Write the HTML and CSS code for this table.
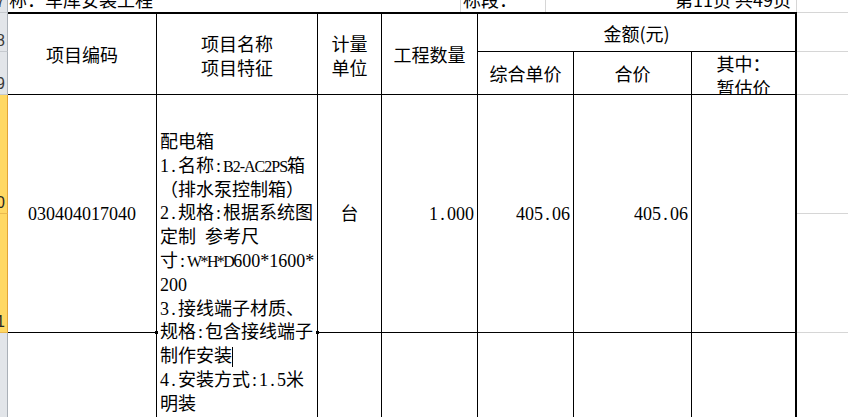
FILE: index.html
```html
<!DOCTYPE html>
<html lang="zh-CN">
<head>
<meta charset="utf-8">
<title>分部分项工程量清单</title>
<link rel="stylesheet" href="styles.css">
</head>
<body>
<div class="sheet">
  <!-- row 7 (cut off at the top) -->
  <div class="rh row-7"><span>7</span></div>
  <div class="toprow">
    <div class="seg seg-name"><span class="cut">称：车库安装工程</span></div>
    <div class="seg seg-bid"><span class="cut">标段：</span></div>
    <div class="seg seg-page"><span class="cut">第11页 共49页</span></div>
    <div class="seg seg-rest"></div>
  </div>

  <!-- rows 8-9: table header -->
  <div class="rh row-8 first line"><span>8</span></div>
  <div class="rh row-9 line"><span>9</span></div>

  <div class="cell hd top col-a rows-hd">项目编码</div>
  <div class="cell hd top col-b rows-hd nudge">项目名称<br>项目特征</div>
  <div class="cell hd top col-c rows-hd nudge">计量<br>单位</div>
  <div class="cell hd top col-d rows-hd">工程数量</div>
  <div class="cell hd top thick-r col-amt row-8">金额(元)</div>
  <div class="gl gl-first col-r row-8"></div>

  <div class="cell hd col-e row-9">综合单价</div>
  <div class="cell hd col-f row-9">合价</div>
  <div class="cell hd thick-r col-g row-9 clip">其中：<br>暂估价</div>
  <div class="gl col-r row-9"></div>

  <!-- rows 10-11: item -->
  <div class="rh sel line row-10"><span>10</span></div>
  <div class="rh sel line row-11"><span>11</span></div>

  <div class="cell ser mid col-a rows-body">030404017040</div>
  <div class="cell open ser edit col-b rows-edit">
    <div class="ln">配电箱</div>
    <div class="ln">1<span class="hw">.</span>名称<span class="hw">:</span><span class="lt">B2-AC2PS</span>箱</div>
    <div class="ln">（排水泵控制箱）</div>
    <div class="ln">2<span class="hw">.</span>规格<span class="hw">:</span>根据系统图</div>
    <div class="ln">定制<span class="hw">&nbsp;</span>参考尺</div>
    <div class="ln">寸<span class="hw">:</span><span class="lt tight">W*H*D</span>600*1600*</div>
    <div class="ln">200</div>
    <div class="ln">3<span class="hw">.</span>接线端子材质、</div>
    <div class="ln">规格<span class="hw">:</span>包含接线端子</div>
    <div class="ln">制作安装<span class="caret"></span></div>
    <div class="ln">4<span class="hw">.</span>安装方式<span class="hw">:</span>1<span class="hw">.</span>5米</div>
    <div class="ln">明装</div>
    <span class="dot dot-l"></span>
    <span class="dot dot-r"></span>
  </div>
  <div class="cell ser mid col-c rows-body">台</div>
  <div class="cell ser num col-d rows-body">1<span class="hw">.</span>000</div>
  <div class="cell ser num col-e rows-body">405<span class="hw">.</span>06</div>
  <div class="cell ser num col-f rows-body">405<span class="hw">.</span>06</div>
  <div class="cell thick-r col-g rows-body"></div>
  <div class="gl col-r row-10"></div>
  <div class="gl col-r row-11"></div>

  <!-- row 12 -->
  <div class="rh row-12"></div>
  <div class="cell open col-a row-12"></div>
  <div class="cell open col-c row-12"></div>
  <div class="cell open col-d row-12"></div>
  <div class="cell open col-e row-12"></div>
  <div class="cell open col-f row-12"></div>
  <div class="cell open thick-r col-g row-12"></div>
  <div class="col-r row-12"></div>
</div>
</body>
</html>
```

FILE: styles.css
```css
* { box-sizing: border-box; }
html, body { margin: 0; padding: 0; }
body {
  width: 848px;
  height: 417px;
  overflow: hidden;
  background: #fff;
  color: #000;
  font-family: "Noto Sans CJK SC", sans-serif;
}

.sheet {
  display: grid;
  grid-template-columns: 8px 149px 161px 64px 96px 96px 118px 105px 51px;
  grid-template-rows: 12px 40px 43px 119px 119px 84px;
  width: 848px;
  height: 417px;
}

/* grid placement */
.col-a { grid-column: 2; }
.col-b { grid-column: 3; }
.col-c { grid-column: 4; }
.col-d { grid-column: 5; }
.col-e { grid-column: 6; }
.col-f { grid-column: 7; }
.col-g { grid-column: 8; }
.col-r { grid-column: 9; }
.col-amt { grid-column: 6 / 9; }
.row-7 { grid-row: 1; }
.row-8 { grid-row: 2; }
.row-9 { grid-row: 3; }
.row-10 { grid-row: 4; }
.row-11 { grid-row: 5; }
.row-12 { grid-row: 6; }
.rows-hd { grid-row: 2 / 4; }
.rows-body { grid-row: 4 / 6; }
.rows-edit { grid-row: 4 / 7; }

/* row headers */
.rh {
  grid-column: 1;
  background: #e2e5e9;
  border-right: 1px solid #aab0b7;
  display: flex;
  justify-content: flex-end;
  align-items: flex-end;
  padding: 0 2px 2px 0;
  overflow: hidden;
  font: 16px/16px "Liberation Sans", sans-serif;
  color: #3a3a3a;
  white-space: nowrap;
}
.rh.first { border-top: 1px solid #c6cacf; }
.rh.line { border-bottom: 1px solid #c6cacf; }
.rh.sel {
  background: #ffd863;
  border-right-color: #e2a436;
  border-bottom-color: #eab94f;
  color: #262626;
}

/* top (cut) row */
.toprow {
  grid-column: 2 / 10;
  grid-row: 1;
  display: flex;
}
.seg {
  border-right: 1px solid #d6d6d6;
  white-space: nowrap;
}
.seg-name { width: 453px; padding-left: 1px; }
.seg-bid { width: 85px; padding-left: 2px; }
.seg-page { width: 251px; padding-right: 5px; text-align: right; }
.seg-rest { flex: 1; border-right: none; }
.cut {
  display: block;
  margin-top: -13px;
  font-size: 18px;
  line-height: 24px;
}

/* table cells */
.cell {
  border-right: 1px solid #000;
  border-bottom: 1px solid #000;
  background: #fff;
}
.cell.top { border-top: 2px solid #000; }
.cell.thick-r { border-right: 2px solid #000; }
.cell.open { border-bottom: none; }

.hd {
  display: flex;
  align-items: center;
  justify-content: center;
  text-align: center;
  font-size: 18px;
  line-height: 24px;
  white-space: nowrap;
}
.hd.nudge { padding-top: 2px; }
.hd.clip { overflow: hidden; padding-top: 4px; }

.gl {
  border-bottom: 1px solid #d6d6d6;
}
.gl-first { border-top: 1px solid #d6d6d6; }

.ser {
  font-family: "Liberation Serif", "Noto Sans CJK SC", serif;
  font-size: 18px;
  line-height: 24px;
  white-space: nowrap;
}
.mid {
  display: flex;
  align-items: center;
  justify-content: center;
}
.num {
  display: flex;
  align-items: center;
  justify-content: flex-end;
  padding-right: 3px;
}

/* editing cell */
.edit {
  position: relative;
  padding: 36px 0 0 3px;
  line-height: 23.8px;
}
.ln { height: 23.8px; }
.hw {
  display: inline-block;
  width: 9px;
  text-align: center;
}
.lt {
  font-size: 16px;
  letter-spacing: -1px;
}
.lt.tight { letter-spacing: -1.6px; }
.caret {
  display: inline-block;
  width: 1px;
  height: 20px;
  background: #000;
  vertical-align: -5px;
}
.dot {
  position: absolute;
  top: 236px;
  width: 3px;
  height: 3px;
  background: #000;
}
.dot-l { left: -2px; }
.dot-r { left: 159px; }
```
